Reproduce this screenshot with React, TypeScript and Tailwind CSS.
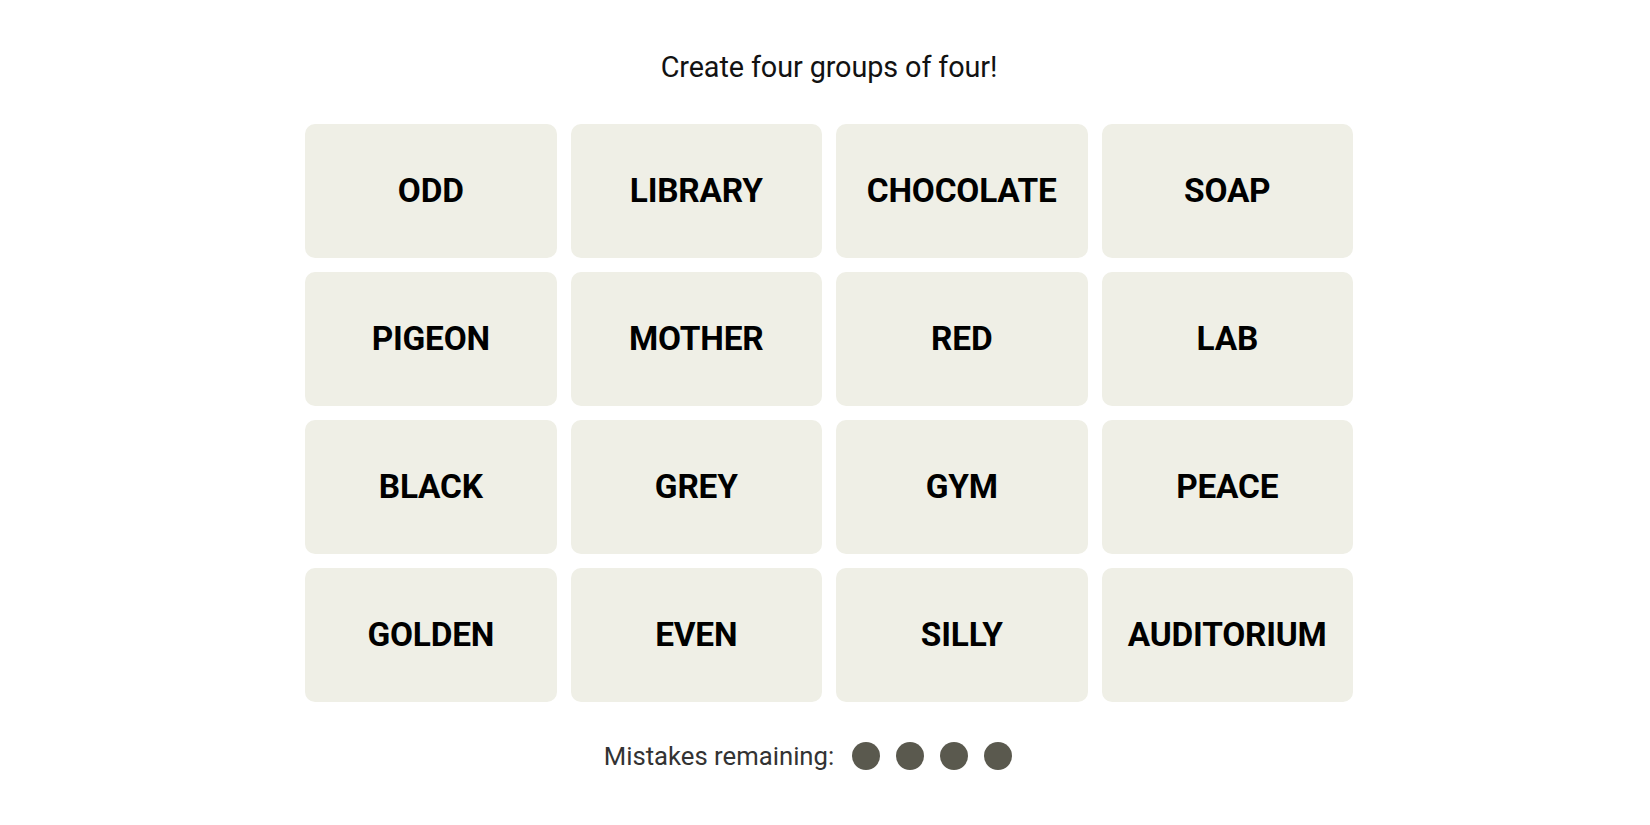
import React from "react";

const words = [
  "ODD", "LIBRARY", "CHOCOLATE", "SOAP",
  "PIGEON", "MOTHER", "RED", "LAB",
  "BLACK", "GREY", "GYM", "PEACE",
  "GOLDEN", "EVEN", "SILLY", "AUDITORIUM",
];

export default function App() {
  return (
    <div className="min-h-[825px] w-full bg-white flex flex-col items-center pl-[8px] pt-[51px]" style={{ fontFamily: "Roboto, 'Liberation Sans', sans-serif" }}>
      <p className="h-[32px] leading-[32px] text-[28.8px] font-normal text-[#121212] tracking-[-0.1px]">
        Create four groups of four!
      </p>
      <div className="mt-[41px] grid grid-cols-4 w-[1048px] gap-[14px]">
        {words.map((w) => (
          <div
            key={w}
            className="h-[134px] rounded-[10px] bg-[#efefe6] flex items-center justify-center text-[33.4px] font-bold text-black tracking-[-0.2px]"
          >
            {w}
          </div>
        ))}
      </div>
      <div className="mt-[38px] h-[32px] flex items-center pr-[42px]">
        <span className="text-[25.7px] leading-[32px] text-[#333333] font-normal">Mistakes remaining:</span>
        <div className="ml-[18px] flex items-center gap-[16px]">
          <span className="block w-[28px] h-[28px] rounded-full bg-[#5a594e]" />
          <span className="block w-[28px] h-[28px] rounded-full bg-[#5a594e]" />
          <span className="block w-[28px] h-[28px] rounded-full bg-[#5a594e]" />
          <span className="block w-[28px] h-[28px] rounded-full bg-[#5a594e]" />
        </div>
      </div>
    </div>
  );
}
